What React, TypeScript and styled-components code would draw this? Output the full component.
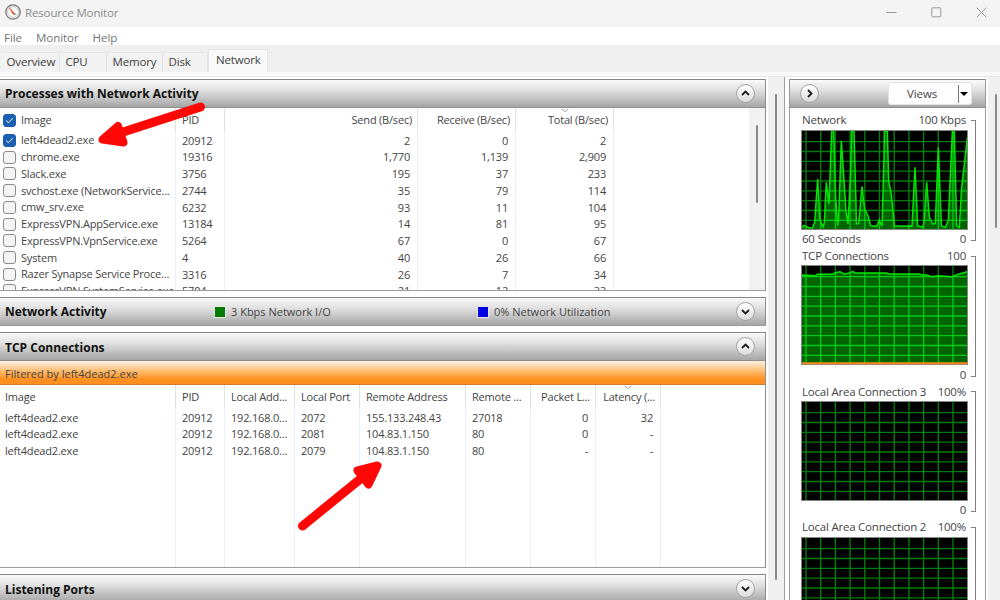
import React from "react";
import styled, { createGlobalStyle } from "styled-components";

const GlobalStyle = createGlobalStyle`
  * { box-sizing: border-box; }
  body { margin: 0; background: #f0f0f0; overflow: hidden; }
`;

const Window = styled.div`
  position: relative;
  width: 1000px;
  height: 600px;
  overflow: hidden;
  display: flex;
  flex-direction: column;
  background: #f0f0f0;
  color: #444;
  font: 11px/16px "Open Sans", "Noto Sans", sans-serif;
  white-space: nowrap;
`;

const TitleBar = styled.header`
  flex: none;
  height: 27px;
  display: flex;
  align-items: center;
  padding: 0 13px 3px 5px;
  background: #f3f3f3;
  color: #8c8c8c;
  font-size: 11.5px;
`;
const AppTitle = styled.span`
  margin-left: 4px;
  padding-top: 1px;
  flex: 1;
  letter-spacing: -0.14px;
`;
const WindowButtons = styled.div`
  display: flex;
  gap: 34px;
`;

const MenuBar = styled.nav`
  flex: none;
  height: 18px;
  display: flex;
  gap: 14px;
  align-items: center;
  padding: 3px 4px 0 4px;
  background: #fff;
  color: #747474;
  font-size: 11.5px;
  letter-spacing: -0.05px;
`;

const TabStrip = styled.div`
  flex: none;
  height: 27px;
  display: flex;
  align-items: flex-end;
  padding-left: 1px;
  background: #efefef;
`;
const Tab = styled.div<{ $width: number; $active?: boolean }>`
  width: ${(p) => p.$width}px;
  height: ${(p) => (p.$active ? 23 : 20)}px;
  padding: ${(p) => (p.$active ? "2px 0 0 7px" : "1px 0 0 5.5px")};
  border: 1px solid #e4e4e4;
  border-left-width: ${(p) => (p.$active ? 1 : 0)}px;
  border-bottom: 0;
  background: ${(p) => (p.$active ? "#f9f9f9" : "#f2f2f2")};
  color: #404040;
  font-size: 11.5px;
  letter-spacing: -0.15px;
`;
const TabEdge = styled.div`
  flex: none;
  height: 5px;
  background: #f9f9f9;
  border-bottom: 1px solid #e5e5e5;
`;

const Body = styled.main`
  flex: 1;
  min-height: 0;
  display: flex;
`;
const Sections = styled.div`
  width: 768px;
  padding-top: 2px;
  background: #fff;
  display: flex;
  flex-direction: column;
  gap: 6px;
`;
const Section = styled.section<{ $height: number }>`
  flex: none;
  width: 766px;
  height: ${(p) => p.$height}px;
  display: flex;
  flex-direction: column;
  overflow: hidden;
  border-right: 1px solid #8c8c8c;
  border-bottom: 1px solid #9c9c9c;
  background: #fff;
`;
const SectionHeader = styled.div`
  flex: none;
  height: 29px;
  display: flex;
  align-items: center;
  padding: 0 10px 0 5px;
  border-top: 1px solid #868686;
  border-bottom: 1px solid #8e8e8e;
  background: linear-gradient(#fafafa, #dedede 40%, #a6a6a6);
`;
const SectionTitle = styled.h2<{ $drop?: boolean }>`
  margin: 0;
  width: 209px;
  padding-top: ${(p) => (p.$drop ? 2 : 0)}px;
  color: #111;
  font: 700 12px/16px "Open Sans", "Noto Sans", sans-serif;
`;
const Legend = styled.div<{ $width: number }>`
  width: ${(p) => p.$width}px;
  display: flex;
  align-items: center;
  gap: 5px;
`;
const Swatch = styled.i<{ $color: string }>`
  width: 12px;
  height: 12px;
  border: 1px solid #e8e8e8;
  background: ${(p) => p.$color};
`;
const RoundButton = styled.span`
  width: 19px;
  height: 19px;
  display: flex;
  align-items: center;
  justify-content: center;
  border: 1px solid #a2a2a2;
  border-radius: 50%;
  background: linear-gradient(#fff, #dcdcdc);
`;
const HeaderEnd = styled.div`
  margin-left: auto;
`;
const FilterBar = styled.div`
  flex: none;
  height: 24px;
  padding: 5px 5px 0;
  border-bottom: 1px solid #d07a2c;
  background: linear-gradient(#fff3e4, #ffb460 50%, #ff9020 80%);
`;

const Table = styled.div`
  flex: 1;
  min-height: 0;
  display: flex;
  letter-spacing: -0.2px;
`;
const Column = styled.div<{ $width: number; $right?: boolean }>`
  flex: none;
  width: ${(p) => p.$width}px;
  border-right: 1px solid #e8f2fc;
  text-align: ${(p) => (p.$right ? "right" : "left")};
`;
const HeadCell = styled.div<{ $pad: string }>`
  position: relative;
  height: 24px;
  margin-right: -1px;
  padding: ${(p) => p.$pad};
  border-right: 1px solid #e2e2e2;
  line-height: 24px;
`;
const SortMark = styled.svg`
  position: absolute;
  top: 0;
  left: calc(50% - 4px);
`;
const Cells = styled.div`
  padding-top: 0.7px;
`;
const Cell = styled.div<{ $pad: string }>`
  height: 16.74px;
  padding: ${(p) => p.$pad};
  line-height: 16.74px;
`;
const CheckLine = styled.div<{ $height: number }>`
  height: ${(p) => p.$height}px;
  display: flex;
  align-items: center;
  gap: 5px;
  padding-left: 3px;
`;
const Box = styled.span<{ $on?: boolean }>`
  flex: none;
  width: 13px;
  height: 13px;
  display: flex;
  align-items: center;
  justify-content: center;
  border: 1px solid ${(p) => (p.$on ? "#1a5fb0" : "#8b8b8b")};
  border-radius: 3px;
  background: ${(p) => (p.$on ? "#1a5fb0" : "#f4f4f4")};
`;
const InnerScroll = styled.div`
  width: 16px;
  margin-left: auto;
  padding: 17px 0 0 7px;
  background: #f1f1f1;
`;
const Thumb = styled.div<{ $height: number }>`
  width: 2px;
  height: ${(p) => p.$height}px;
  border-radius: 1px;
  background: #888;
`;
const OuterScroll = styled.div`
  width: 17px;
  padding: 17px 0 0 7px;
  border-right: 1px solid #a0a0a0;
  background: #f0f0f0;
`;

const Side = styled.aside`
  width: 203px;
  padding: 2px 2px 0 4px;
  background: #fff;
`;
const SidePanel = styled.div`
  height: 560px;
  border: 1px solid #9a9a9a;
  border-top-color: #868686;
`;
const SideHeader = styled.div`
  height: 28px;
  display: flex;
  align-items: center;
  justify-content: space-between;
  padding: 0 13px 0 10px;
  border-bottom: 1px solid #8e8e8e;
  background: linear-gradient(#fafafa, #dedede 40%, #a6a6a6);
`;
const ViewsButton = styled.div`
  width: 84px;
  height: 23px;
  display: flex;
  align-items: center;
  border: 1px solid #e4e4e4;
  border-radius: 3px;
  background: #fdfdfd;
  font-size: 11.5px;
  letter-spacing: -0.1px;
`;
const ViewsLabel = styled.span`
  width: 70px;
  height: 18px;
  padding: 1px 0 0 18px;
  border-right: 1px solid #777;
`;
const Monitor = styled.div`
  height: 135.7px;
  padding: 4px 0 0 11px;
  display: flex;
  gap: 3px;
  font-size: 11.5px;
  letter-spacing: -0.22px;
`;
const Plot = styled.div`
  width: 167px;
`;
const Caption = styled.div<{ $foot?: boolean }>`
  height: 17.5px;
  display: flex;
  justify-content: space-between;
  padding: ${(p) => (p.$foot ? 1.4 : 0.4)}px 2px 0 1px;
`;
const Screen = styled.svg`
  display: block;
  width: 167px;
  height: 100px;
  background: #000;
`;
const Bracket = styled.div`
  width: 5px;
  height: 121px;
  margin-top: 8px;
  border: 1px solid #808080;
  border-left: 0;
`;
const RightScroll = styled.div`
  width: 12px;
  padding: 17px 0 0 7px;
`;
const Annotations = styled.svg`
  position: absolute;
  inset: 0;
  pointer-events: none;
`;

const Chevron = ({ dir }: { dir: "up" | "down" | "right" }) => (
  <RoundButton>
    <svg width="9" height="9" viewBox="0 0 9 9" fill="none" stroke="#1c1c1c" strokeWidth="1.8">
      <path d={dir === "up" ? "M1 6l3.5-3.5L8 6" : dir === "down" ? "M1 3l3.5 3.5L8 3" : "M3 1l3.5 3.5L3 8"} />
    </svg>
  </RoundButton>
);

const Check = ({ on }: { on?: boolean }) => (
  <Box $on={on}>
    {on && (
      <svg width="9" height="9" viewBox="0 0 9 9" fill="none" stroke="#fff" strokeWidth="1">
        <path d="M1.2 4.6l2.2 2.1L7.8 2.3" />
      </svg>
    )}
  </Box>
);

type Col = { title: string; width: number; right?: boolean; sort?: boolean; pad?: string; head?: string; values: string[] };

const DataColumn = ({ col }: { col: Col }) => (
  <Column $width={col.width} $right={col.right}>
    <HeadCell $pad={col.head ?? (col.right ? "0 5px 0 0" : "0 0 0 6px")}>
      {col.title}
      {col.sort && (
        <SortMark width="8" height="5" fill="none" stroke="#999">
          <path d="M1 0.8l3 3 3-3" />
        </SortMark>
      )}
    </HeadCell>
    <Cells>
      {col.values.map((v, i) => (
        <Cell key={i} $pad={col.pad ?? (col.right ? "0 7px 0 0" : "0 0 0 6px")}>{v}</Cell>
      ))}
    </Cells>
  </Column>
);

const images = [
  "left4dead2.exe", "chrome.exe", "Slack.exe", "svchost.exe (NetworkService...", "cmw_srv.exe",
  "ExpressVPN.AppService.exe", "ExpressVPN.VpnService.exe", "System", "Razer Synapse Service Proce...",
  "ExpressVPN.SystemService.exe",
];
const processCols: Col[] = [
  { title: "PID", width: 49, values: ["20912", "19316", "3756", "2744", "6232", "13184", "5264", "4", "3316", "5704"] },
  { title: "Send (B/sec)", width: 193, right: true, values: ["2", "1,770", "195", "35", "93", "14", "67", "40", "26", "21"] },
  { title: "Receive (B/sec)", width: 98, right: true, values: ["0", "1,139", "37", "79", "11", "81", "0", "26", "7", "12"] },
  { title: "Total (B/sec)", width: 98, right: true, sort: true, values: ["2", "2,909", "233", "114", "104", "95", "67", "66", "34", "33"] },
];
const tcpCols: Col[] = [
  { title: "Image", width: 176, pad: "0 0 0 5px", head: "0 0 0 5px", values: ["left4dead2.exe", "left4dead2.exe", "left4dead2.exe"] },
  { title: "PID", width: 49, values: ["20912", "20912", "20912"] },
  { title: "Local Add...", width: 70, values: ["192.168.0...", "192.168.0...", "192.168.0..."] },
  { title: "Local Port", width: 65, values: ["2072", "2081", "2079"] },
  { title: "Remote Address", width: 106, values: ["155.133.248.43", "104.83.1.150", "104.83.1.150"] },
  { title: "Remote ...", width: 65, values: ["27018", "80", "80"] },
  { title: "Packet L...", width: 65, right: true, values: ["0", "0", "-"] },
  { title: "Latency (...", width: 65, right: true, sort: true, values: ["32", "-", "-"] },
];

const networkLine =
  "3,292 9,286 17,290 27,294 34,294 41,277 50,147 57,272 67,290 70,277 76,157 84,222 92,4 98,4 104,202 110,287 113,262 121,32 127,122 135,242 141,282 149,122 152,4 159,4 165,222 166,282 173,280 183,170 191,237 201,257 209,287 227,289 235,270 243,289 249,82 250,4 259,4 263,152 271,192 280,287 312,289 327,287 333,289 342,112 350,287 365,292 369,277 377,157 385,262 395,282 403,280 412,52 421,287 433,292 442,272 454,4 460,4 467,287 475,292 482,172 489,112 499,22";
const tcpLine =
  "3,30 45,32 49,28 94,28 102,23 117,20 129,27 142,25 155,20 163,24 257,24 262,27 355,27 362,30 377,30 392,35 412,32 452,35 477,26 499,20";

const gridPath =
  Array.from({ length: 11 }, (_, i) => `M${15 + i * 44.1} 0V300`).join("") +
  Array.from({ length: 9 }, (_, i) => `M0 ${35 + i * 29.5}H501`).join("");

const Graph = ({ id, label, max, foot, line, baseline }: { id: string; label: string; max: string; foot?: string; line?: string; baseline?: boolean }) => (
  <Monitor>
    <Plot>
      <Caption><span>{label}</span><span>{max}</span></Caption>
      <Screen viewBox="0 0 501 300" preserveAspectRatio="none">
        <path d={gridPath} stroke="#007d0a" strokeWidth="4.2" />
        {line && (
          <>
            <clipPath id={id}><polygon points={`3,300 ${line} 499,300`} /></clipPath>
            <g clipPath={`url(#${id})`}>
              <rect width="501" height="300" fill="#006400" />
              <path d={gridPath} stroke="#00cc14" strokeWidth="4" />
            </g>
            <polyline points={line} fill="none" stroke="#00e600" strokeWidth="4.5" />
          </>
        )}
        <rect x="1.5" y="1.5" width="498" height="297" fill="none" stroke="#858585" strokeWidth="3" />
        {baseline && <path d="M3 295H499" stroke="#ff8a1c" strokeWidth="6" />}
      </Screen>
      <Caption $foot><span>{foot}</span><span>0</span></Caption>
    </Plot>
    <Bracket />
  </Monitor>
);

export default function App() {
  return (
    <Window>
      <GlobalStyle />
      <TitleBar>
        <svg width="16" height="16" viewBox="0 0 16 16">
          <circle cx="8" cy="8" r="7.2" fill="#eee" stroke="#777" strokeWidth="1.3" />
          <circle cx="8" cy="8" r="5.3" fill="#fff" stroke="#b5b5b5" strokeWidth="0.7" />
          <path d="M4.3 3.6l5.2 5.7-1.5 1.2z" fill="#e5532a" stroke="#e5532a" strokeWidth="0.5" />
          <path d="M9 10.8l1.7-1.4" stroke="#777" strokeWidth="1.2" />
        </svg>
        <AppTitle>Resource Monitor</AppTitle>
        <WindowButtons>
          <svg width="11" height="11" stroke="#999" fill="none"><path d="M0.5 5.5H10.5" /></svg>
          <svg width="11" height="11" stroke="#999" fill="none"><rect x="0.8" y="0.8" width="9" height="9" rx="0.8" /></svg>
          <svg width="11" height="11" stroke="#999" fill="none"><path d="M0.7 0.7l9.6 9.6M10.3 0.7L0.7 10.3" /></svg>
        </WindowButtons>
      </TitleBar>
      <MenuBar><span>File</span><span>Monitor</span><span>Help</span></MenuBar>
      <TabStrip>
        <Tab $width={59}>Overview</Tab>
        <Tab $width={47}>CPU</Tab>
        <Tab $width={56}>Memory</Tab>
        <Tab $width={45}>Disk</Tab>
        <Tab $width={60} $active>Network</Tab>
      </TabStrip>
      <TabEdge />
      <Body>
        <Sections>
          <Section $height={212}>
            <SectionHeader>
              <SectionTitle>Processes with Network Activity</SectionTitle>
              <HeaderEnd><Chevron dir="up" /></HeaderEnd>
            </SectionHeader>
            <Table>
              <Column $width={176}>
                <HeadCell $pad="0">
                  <CheckLine $height={24}><Check on />Image</CheckLine>
                </HeadCell>
                {images.map((name, i) => (
                  <CheckLine key={name} $height={16.74}><Check on={i === 0} />{name}</CheckLine>
                ))}
              </Column>
              {processCols.map((c) => <DataColumn key={c.title} col={c} />)}
              <InnerScroll><Thumb $height={78} /></InnerScroll>
            </Table>
          </Section>
          <Section $height={29}>
            <SectionHeader>
              <SectionTitle>Network Activity</SectionTitle>
              <Legend $width={263}><Swatch $color="#007a00" />3 Kbps Network I/O</Legend>
              <Legend $width={200}><Swatch $color="#0000e0" />0% Network Utilization</Legend>
              <HeaderEnd><Chevron dir="down" /></HeaderEnd>
            </SectionHeader>
          </Section>
          <Section $height={236}>
            <SectionHeader>
              <SectionTitle $drop>TCP Connections</SectionTitle>
              <HeaderEnd><Chevron dir="up" /></HeaderEnd>
            </SectionHeader>
            <FilterBar>Filtered by left4dead2.exe</FilterBar>
            <Table>{tcpCols.map((c) => <DataColumn key={c.title} col={c} />)}</Table>
          </Section>
          <Section $height={29}>
            <SectionHeader>
              <SectionTitle $drop>Listening Ports</SectionTitle>
              <HeaderEnd><Chevron dir="down" /></HeaderEnd>
            </SectionHeader>
          </Section>
        </Sections>
        <OuterScroll><Thumb $height={486} /></OuterScroll>
        <Side>
          <SidePanel>
            <SideHeader>
              <Chevron dir="right" />
              <ViewsButton>
                <ViewsLabel>Views</ViewsLabel>
                <svg width="10" height="6"><path d="M1 1h8L5 5z" fill="#000" /></svg>
              </ViewsButton>
            </SideHeader>
            <Graph id="network" label="Network" max="100 Kbps" foot="60 Seconds" line={networkLine} />
            <Graph id="tcp" label="TCP Connections" max="100" line={tcpLine} baseline />
            <Graph id="lan3" label="Local Area Connection 3" max="100%" />
            <Graph id="lan2" label="Local Area Connection 2" max="100%" />
          </SidePanel>
        </Side>
        <RightScroll><Thumb $height={134} /></RightScroll>
      </Body>
      <Annotations width="1000" height="600" stroke="#fe0707" fill="#fe0707" strokeLinecap="round" strokeLinejoin="round">
        <path d="M200.5 107L120 133M302.5 526L364 476" strokeWidth="9" />
        <path d="M102.5 139.5L118 126L123.5 142.5ZM377.5 465.5L357.5 470.5L368.5 484.5Z" strokeWidth="8" />
      </Annotations>
    </Window>
  );
}
